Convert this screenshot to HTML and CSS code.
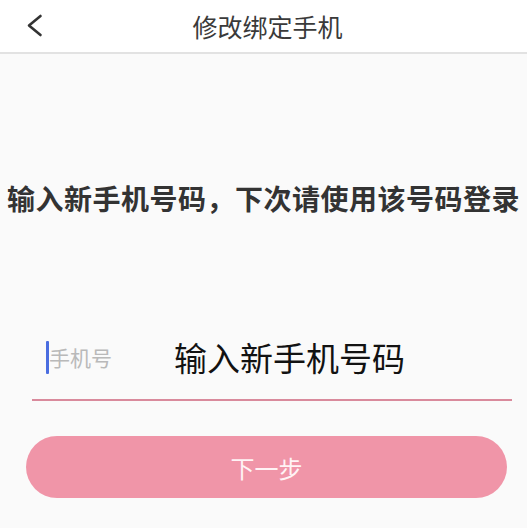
FILE: index.html
```html
<!DOCTYPE html>
<html lang="zh-CN">
<head>
<meta charset="utf-8">
<title>修改绑定手机</title>
<link rel="stylesheet" href="styles.css">
</head>
<body>
<header class="topbar">
  <div class="back">
    <svg width="18" height="24" viewBox="0 0 18 24"><polyline points="14.5,2 3,11.5 14.5,21" fill="none" stroke="#333" stroke-width="2.6" stroke-linecap="round" stroke-linejoin="round"/></svg>
  </div>
  <div class="title">修改绑定手机</div>
  <div></div>
</header>
<main class="content">
  <h1 class="heading">输入新手机号码，下次请使用该号码登录</h1>
  <div class="field">
    <span class="cursor"></span>
    <span class="placeholder">手机号</span>
    <span class="label">输入新手机号码</span>
  </div>
  <button class="next">下一步</button>
</main>
</body>
</html>
```
FILE: styles.css
```css
* { box-sizing: border-box; }
html, body { margin: 0; padding: 0; }
body {
  background: #fafafa;
  font-family: "Noto Sans CJK SC", "Noto Sans", sans-serif;
  width: 527px;
  height: 528px;
  overflow: hidden;
}
.topbar {
  height: 54px;
  background: #fff;
  border-bottom: 2px solid #e2e2e2;
  display: grid;
  grid-template-columns: 1fr auto 1fr;
  align-items: center;
}
.back {
  padding-left: 26px;
  display: flex;
  align-items: center;
  height: 44px;
}
.title {
  font-size: 25px;
  color: #3a3a3a;
  line-height: 44px;
  padding-left: 8px;
}
.content {
  display: flex;
  flex-direction: column;
}
.heading {
  margin: 124px 0 0;
  font-size: 28px;
  letter-spacing: 0.5px;
  line-height: 40px;
  font-weight: bold;
  color: #333;
  text-align: center;
  white-space: nowrap;
}
.field {
  margin: 112px 15px 0 32px;
  padding: 11px 0 25px 14px;
  border-bottom: 2px solid #d98a9c;
  display: flex;
  align-items: center;
  height: 71px;
}
.cursor {
  width: 3px;
  height: 33px;
  background: #4a6de0;
  border-radius: 1px;
}
.placeholder {
  font-size: 21px;
  color: #b9b9b9;
  line-height: 33px;
  width: 63px;
  margin-right: 62px;
}
.label {
  font-size: 33px;
  line-height: 33px;
  color: #121212;
}
.next {
  margin: 35px 0 0 26px;
  width: 481px;
  height: 62px;
  border: none;
  border-radius: 31px;
  background: #f095a8;
  color: #fff3f5;
  font-family: inherit;
  font-size: 24px;
  padding: 0;
}
```
